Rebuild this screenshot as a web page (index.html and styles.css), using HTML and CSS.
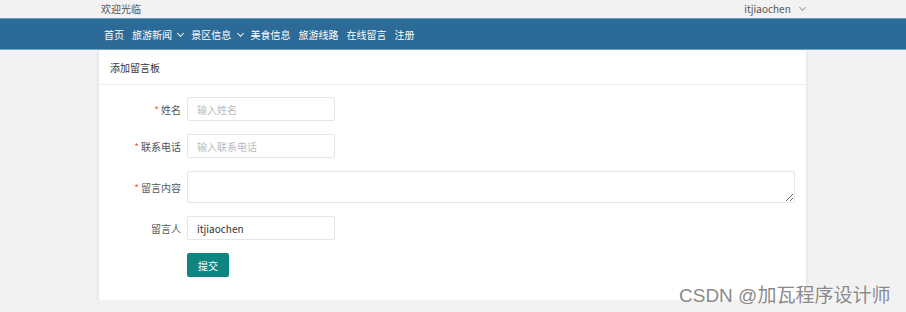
FILE: index.html
```html
<!DOCTYPE html>
<html lang="zh-CN">
<head>
    <meta charset="UTF-8">
    <meta name="viewport" content="width=device-width, initial-scale=1.0">
    <title>在线留言</title>
    <link rel="stylesheet" href="styles.css">
</head>
<body>
    <div class="topbar">
        <div class="wrap topbar-inner">
            <span>欢迎光临</span>
            <span class="user">itjiaochen <span class="caret"></span></span>
        </div>
    </div>

    <div class="nav">
        <ul class="wrap nav-list">
            <li>首页</li>
            <li>旅游新闻 <span class="caret"></span></li>
            <li>景区信息 <span class="caret"></span></li>
            <li>美食信息</li>
            <li>旅游线路</li>
            <li>在线留言</li>
            <li>注册</li>
        </ul>
    </div>

    <div class="card">
        <div class="card-header">添加留言板</div>
        <form class="card-body">
            <div class="row">
                <label class="req">姓名</label>
                <input type="text" placeholder="输入姓名">
            </div>
            <div class="row">
                <label class="req">联系电话</label>
                <input type="text" placeholder="输入联系电话">
            </div>
            <div class="row">
                <label class="req">留言内容</label>
                <textarea></textarea>
            </div>
            <div class="row">
                <label>留言人</label>
                <input type="text" value="itjiaochen">
            </div>
            <div class="row">
                <label></label>
                <button type="button">提交</button>
            </div>
        </form>
    </div>

    <div class="watermark">CSDN @加瓦程序设计师</div>
</body>
</html>
```

FILE: styles.css
```css
body {
    margin: 0;
    background-color: #f2f2f2;
    font-family: "Noto Sans CJK SC", "Liberation Sans", sans-serif;
    font-size: 10px;
    color: #333;
    overflow: hidden;
}
.wrap {
    width: 706px;
    margin: 0 auto;
}
.topbar {
    height: 18px;
    line-height: 18px;
    color: #555;
}
.topbar-inner {
    display: flex;
    justify-content: space-between;
    padding: 0 0 0 2px;
}
.user {
    margin-right: 2px;
}
.caret {
    display: inline-block;
    width: 4px;
    height: 4px;
    border-right: 1px solid currentColor;
    border-bottom: 1px solid currentColor;
    transform: rotate(45deg);
    margin: 0 0 3px 4px;
    opacity: 0.7;
}
.topbar .caret {
    margin-left: 7px;
    opacity: 0.5;
}
.nav {
    height: 30px;
    background-color: #2c6b97;
    border-top: 1px solid #6b9cc0;
    border-bottom: 1px solid #7aa4c3;
}
.nav-list {
    list-style: none;
    margin: 0 auto;
    padding: 0 0 0 4px;
    display: flex;
    gap: 8px;
    height: 30px;
    align-items: center;
    color: #fff;
    font-size: 10px;
    box-sizing: border-box;
}
.nav-list .caret {
    opacity: 0.9;
}
.card {
    width: 707px;
    margin: 0 auto 0 99px;
    background-color: #fff;
    box-shadow: 0 1px 4px rgba(0, 0, 0, 0.1);
    border-radius: 2px;
}
.card-header {
    height: 34px;
    line-height: 35px;
    padding-left: 11px;
    border-bottom: 1px solid #f0f0f0;
    color: #333;
}
.card-body {
    padding: 12px 11px 23px 0;
    display: flex;
    flex-direction: column;
    gap: 13px;
}
.row {
    display: flex;
    align-items: center;
}
.row label {
    width: 82px;
    flex: none;
    text-align: right;
    padding-right: 6px;
    color: #555;
}
.req::before {
    content: "*";
    color: #ff5722;
    margin-right: 2px;
}
input, textarea {
    box-sizing: border-box;
    width: 148px;
    height: 24px;
    border: 1px solid #e6e6e6;
    border-radius: 2px;
    padding: 0 9px;
    font-family: inherit;
    font-size: 10px;
    color: #333;
    outline: none;
    display: block;
    margin: 0;
}
input::placeholder {
    color: #bbb;
}
textarea {
    flex: 1;
    height: 32px;
    resize: vertical;
    padding: 4px 9px;
}
button {
    width: 42px;
    height: 24px;
    border: none;
    border-radius: 2px;
    background-color: #0f8581;
    color: #fff;
    font-family: inherit;
    font-size: 10px;
    padding: 0;
}
.watermark {
    position: absolute;
    left: 679px;
    top: 280px;
    font-size: 19px;
    color: #8a8a8a;
    font-family: "Liberation Sans", "Noto Sans CJK SC", sans-serif;
    text-shadow: 0 0 2px #fff;
}
```
